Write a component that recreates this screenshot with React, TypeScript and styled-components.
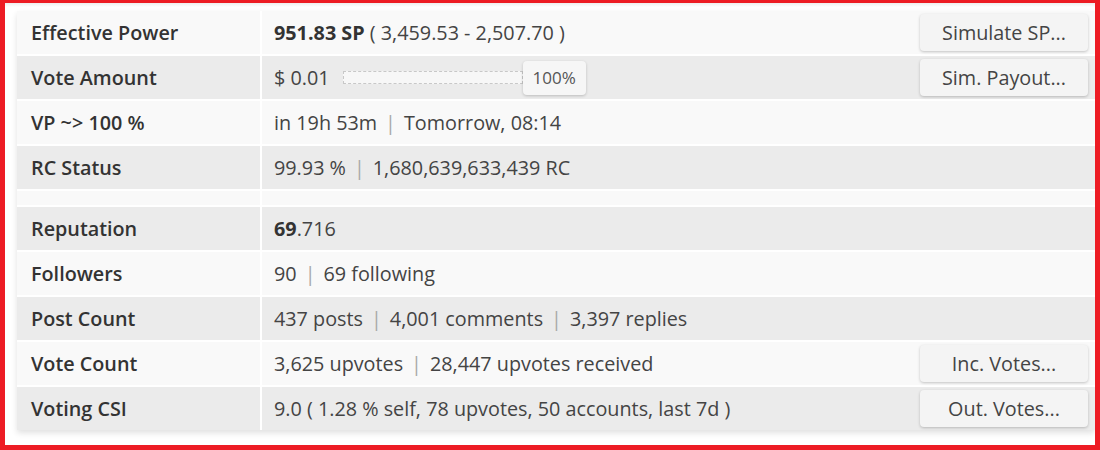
import styled, { createGlobalStyle } from 'styled-components';

const GlobalStyle = createGlobalStyle`
	html, body {
		margin: 0;
		padding: 0;
		background: #ffffff;
	}
	body {
		font-family: 'Open Sans', 'Liberation Sans', sans-serif;
	}
`;

type RowType = {
	label: string;
	value: React.ReactNode;
	action?: string;
	shade: boolean;
};

export default function App() {
	const topRows: RowType[] = [
		{
			label: 'Effective Power',
			value: (
				<>
					<b>951.83 SP</b>&nbsp;( 3,459.53 - 2,507.70 )
				</>
			),
			action: 'Simulate SP...',
			shade: false,
		},
		{
			label: 'Vote Amount',
			value: (
				<>
					$ 0.01
					<Slider>
						<Track />
						<Thumb>100%</Thumb>
					</Slider>
				</>
			),
			action: 'Sim. Payout...',
			shade: true,
		},
		{
			label: 'VP ~> 100 %',
			value: (
				<>
					in 19h 53m<Pipe>|</Pipe>Tomorrow, 08:14
				</>
			),
			shade: false,
		},
		{
			label: 'RC Status',
			value: (
				<>
					99.93 %<Pipe>|</Pipe>1,680,639,633,439 RC
				</>
			),
			shade: true,
		},
	];

	const bottomRows: RowType[] = [
		{
			label: 'Reputation',
			value: (
				<>
					<b>69</b>.716
				</>
			),
			shade: true,
		},
		{
			label: 'Followers',
			value: (
				<>
					90<Pipe>|</Pipe>69 following
				</>
			),
			shade: false,
		},
		{
			label: 'Post Count',
			value: (
				<>
					437 posts<Pipe>|</Pipe>4,001 comments<Pipe>|</Pipe>3,397
					replies
				</>
			),
			shade: true,
		},
		{
			label: 'Vote Count',
			value: (
				<>
					3,625 upvotes<Pipe>|</Pipe>28,447 upvotes received
				</>
			),
			action: 'Inc. Votes...',
			shade: false,
		},
		{
			label: 'Voting CSI',
			value: (
				<>9.0 ( 1.28 % self, 78 upvotes, 50 accounts, last 7d )</>
			),
			action: 'Out. Votes...',
			shade: true,
		},
	];

	const renderRow = (r: RowType) => (
		<Row key={r.label} $shade={r.shade}>
			<Label>{r.label}</Label>
			<Value>
				<ValueText>{r.value}</ValueText>
				{r.action && <ActionButton type="button">{r.action}</ActionButton>}
			</Value>
		</Row>
	);

	return (
		<>
			<GlobalStyle />
			<Frame>
				<Panel>
					{topRows.map(renderRow)}
					<Row $shade={false} $spacer>
						<Label />
						<Value />
					</Row>
					{bottomRows.map(renderRow)}
				</Panel>
			</Frame>
		</>
	);
}

const Frame = styled.div`
	box-sizing: border-box;
	width: 1100px;
	height: 450px;
	border-style: solid;
	border-color: #ed1c24;
	border-width: 3px 5px 5px 5px;
	padding: 8px 0 0 12px;
	overflow: hidden;
	background: linear-gradient(#eeeeee, #ffffff 4px);
`;

const Panel = styled.div`
	display: flex;
	flex-direction: column;
	gap: 2px;
	background: #ffffff;
	box-shadow: 0 3px 6px rgba(0, 0, 0, 0.12);
`;

const Row = styled.div<{ $shade: boolean; $spacer?: boolean }>`
	display: grid;
	grid-template-columns: 243px 1fr;
	column-gap: 2px;
	height: ${(p) => (p.$spacer ? '14px' : '43px')};

	& > div {
		background: ${(p) => (p.$shade ? '#ebebeb' : '#f9f9f9')};
	}
`;

const Label = styled.div`
	display: flex;
	align-items: center;
	padding-left: 14px;
	font-size: 19.8px;
	font-weight: 600;
	color: #333333;
`;

const Value = styled.div`
	display: flex;
	align-items: center;
	justify-content: space-between;
	padding: 0 7px 0 12px;
	font-size: 19.8px;
	color: #444444;
`;

const ValueText = styled.div`
	display: flex;
	align-items: center;
	white-space: pre;

	b {
		font-weight: 700;
		color: #333333;
	}
`;

const Pipe = styled.span`
	color: #a8a8a8;
	margin: 0 8px;
`;

const Slider = styled.div`
	display: flex;
	align-items: center;
	margin-left: 13px;
`;

const Track = styled.div`
	box-sizing: border-box;
	width: 180px;
	height: 13px;
	background: #f7f7f7;
	border: 1px dashed #c8c8c8;
`;

const Thumb = styled.div`
	box-sizing: border-box;
	width: 63px;
	height: 34px;
	display: flex;
	align-items: center;
	justify-content: center;
	background: #f6f6f6;
	border-radius: 4px;
	box-shadow: 0 1px 3px rgba(0, 0, 0, 0.2);
	font-size: 17px;
	color: #555555;
`;

const ActionButton = styled.button`
	box-sizing: border-box;
	width: 168px;
	height: 37px;
	border: none;
	border-radius: 4px;
	background: #f4f4f4;
	box-shadow: 0 1px 3px rgba(0, 0, 0, 0.22);
	font-family: 'Open Sans', 'Liberation Sans', sans-serif;
	font-size: 19.8px;
	color: #444444;
	cursor: pointer;
`;
